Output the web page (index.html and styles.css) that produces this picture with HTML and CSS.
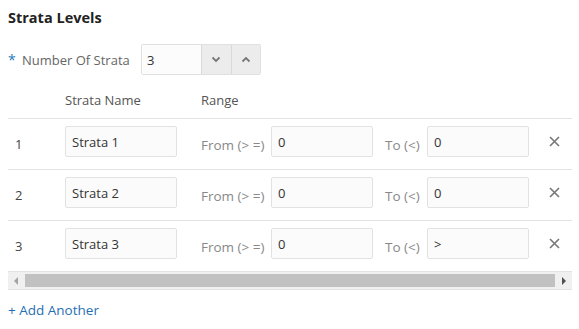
FILE: index.html
```html
<!DOCTYPE html>
<html>
<head>
<meta charset="utf-8">
<link rel="stylesheet" href="styles.css">
</head>
<body>
<div class="page">
  <h2 class="title">Strata Levels</h2>
  <div class="num-row">
    <span class="req">*</span>
    <span class="num-label">Number Of Strata</span>
    <div class="spinner">
      <div class="spin-field">3</div>
      <div class="spin-btn">
        <svg width="10" height="7" viewBox="0 0 10 7"><path d="M1.5 1.5 L5 5 L8.5 1.5" fill="none" stroke="#777" stroke-width="1.8"/></svg>
      </div>
      <div class="spin-btn">
        <svg width="10" height="7" viewBox="0 0 10 7"><path d="M1.5 5.5 L5 2 L8.5 5.5" fill="none" stroke="#777" stroke-width="1.8"/></svg>
      </div>
    </div>
  </div>

  <div class="table">
    <div class="head">
      <div class="c-num"></div>
      <div class="c-name">Strata Name</div>
      <div class="c-range">Range</div>
    </div>

    <div class="row">
      <div class="c-num idx">1</div>
      <div class="field name">Strata 1</div>
      <div class="lbl from">From (&gt; =)</div>
      <div class="field rng">0</div>
      <div class="lbl to">To (&lt;)</div>
      <div class="field rng">0</div>
      <div class="del"><svg width="11" height="11" viewBox="0 0 11 11"><path d="M1 1 L10 10 M10 1 L1 10" stroke="#777" stroke-width="1.6"/></svg></div>
    </div>

    <div class="row">
      <div class="c-num idx">2</div>
      <div class="field name">Strata 2</div>
      <div class="lbl from">From (&gt; =)</div>
      <div class="field rng">0</div>
      <div class="lbl to">To (&lt;)</div>
      <div class="field rng">0</div>
      <div class="del"><svg width="11" height="11" viewBox="0 0 11 11"><path d="M1 1 L10 10 M10 1 L1 10" stroke="#777" stroke-width="1.6"/></svg></div>
    </div>

    <div class="row">
      <div class="c-num idx">3</div>
      <div class="field name">Strata 3</div>
      <div class="lbl from">From (&gt; =)</div>
      <div class="field rng">0</div>
      <div class="lbl to">To (&lt;)</div>
      <div class="field rng">&gt;</div>
      <div class="del"><svg width="11" height="11" viewBox="0 0 11 11"><path d="M1 1 L10 10 M10 1 L1 10" stroke="#777" stroke-width="1.6"/></svg></div>
    </div>

    <div class="hscroll">
      <div class="arr arr-left"></div>
      <div class="thumb"></div>
      <div class="arr arr-right"></div>
    </div>
  </div>

  <div class="add">+ Add Another</div>
</div>
</body>
</html>
```

FILE: styles.css
```css
html, body {
  margin: 0;
  padding: 0;
  background: #fff;
}

.page {
  width: 564px;
  padding: 8px 0 0 8px;
  font-family: "Open Sans", "Noto Sans", sans-serif;
  font-size: 13px;
  color: #333;
}

.title {
  margin: 0;
  font-size: 14.5px;
  font-weight: 700;
  line-height: 20px;
  color: #222;
}

.num-row {
  display: flex;
  align-items: center;
  margin-top: 16px;
  height: 31px;
}

.req {
  color: #2a7ab8;
  font-size: 14px;
  width: 14px;
  align-self: flex-start;
  margin-top: 6px;
}

.num-label {
  color: #666;
  width: 119px;
}

.spinner {
  display: flex;
  height: 31px;
  border: 1px solid #e0e0e0;
  border-radius: 2px;
  box-sizing: border-box;
  width: 120px;
}

.spin-field {
  width: 60px;
  background: #fcfcfc;
  padding: 7px 0 0 5px;
  box-sizing: border-box;
  line-height: 16px;
  color: #333;
}

.spin-btn {
  width: 29px;
  background: #ececec;
  border-left: 1px solid #d9d9d9;
  display: flex;
  align-items: center;
  justify-content: center;
}

.table {
  margin-top: 1px;
}

.head {
  display: flex;
  height: 43px;
  box-sizing: border-box;
  padding-top: 15px;
  line-height: 18px;
  color: #555;
  border-bottom: 1px solid #e3e3e3;
}

.c-num {
  width: 57px;
  flex: none;
}

.c-name {
  width: 136px;
}

.row {
  display: flex;
  align-items: flex-start;
  height: 51px;
  box-sizing: border-box;
  border-bottom: 1px solid #e3e3e3;
}

.idx {
  padding-left: 7px;
  box-sizing: border-box;
  margin-top: 16px;
  line-height: 18px;
  color: #444;
}

.field {
  margin-top: 7px;
  height: 31px;
  box-sizing: border-box;
  border: 1px solid #e2e2e2;
  border-radius: 2px;
  background: #fbfbfb;
  padding: 0 6px;
  display: flex;
  align-items: center;
  line-height: 18px;
  color: #333;
}

.field.name {
  width: 112px;
}

.field.rng {
  width: 102px;
}

.lbl {
  margin-top: 17px;
  line-height: 18px;
  font-size: 13.5px;
  color: #888;
}

.from {
  margin-left: 24px;
  width: 70px;
}

.to {
  margin-left: 12px;
  width: 42px;
}

.del {
  margin-left: 20px;
  margin-top: 17px;
  width: 11px;
  height: 11px;
  display: flex;
}

.hscroll {
  display: flex;
  align-items: center;
  height: 17px;
  background: #f0f0f0;
  border-bottom: 1px solid #e3e3e3;
}

.arr {
  width: 17px;
  height: 17px;
  flex: none;
  position: relative;
}

.arr-left::after {
  content: "";
  position: absolute;
  left: 6px;
  top: 5px;
  border-right: 4px solid #a3a3a3;
  border-top: 4px solid transparent;
  border-bottom: 4px solid transparent;
}

.arr-right::after {
  content: "";
  position: absolute;
  left: 7px;
  top: 5px;
  border-left: 4px solid #505050;
  border-top: 4px solid transparent;
  border-bottom: 4px solid transparent;
}

.thumb {
  flex: 1;
  height: 13px;
  background: #c1c1c1;
}

.add {
  margin-top: 11px;
  color: #1f6fb2;
  font-size: 13.5px;
  line-height: 18px;
}
```
